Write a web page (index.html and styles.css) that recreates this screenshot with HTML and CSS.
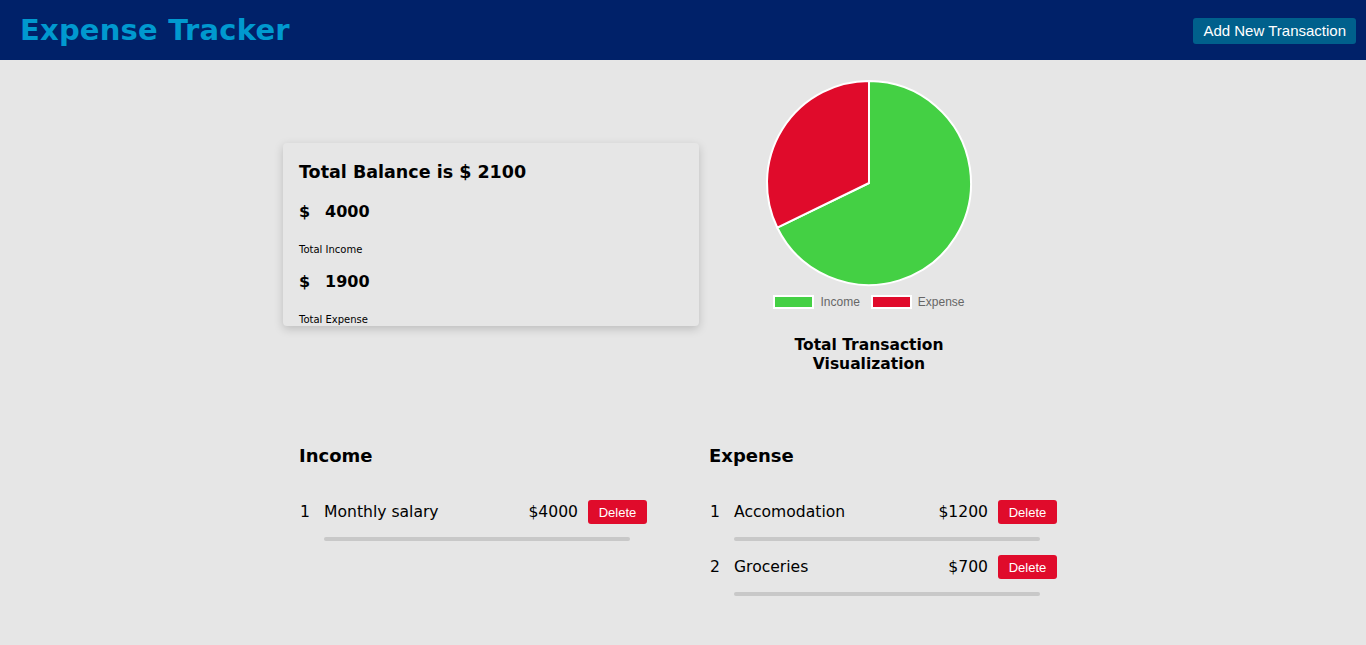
FILE: index.html
```html
<!DOCTYPE html>
<html>
<head>
<meta charset="utf-8">
<title>Expense Tracker</title>
<link rel="stylesheet" href="styles.css">
</head>
<body>
<header class="topbar">
  <h1 class="brand">Expense Tracker</h1>
  <button class="add-btn">Add New Transaction</button>
</header>
<main class="container">
  <section class="summary">
    <div class="card">
      <h2 class="balance">Total Balance is $ 2100</h2>
      <div class="amount"><span class="cur">$</span><span>4000</span></div>
      <div class="label">Total Income</div>
      <div class="amount"><span class="cur">$</span><span>1900</span></div>
      <div class="label">Total Expense</div>
    </div>
    <div class="chart">
      <svg class="pie" width="210" height="210" viewBox="0 0 210 210">
        <path d="M105 105 L105 3 A102 102 0 1 1 13.32 149.72 Z" fill="#44d044" stroke="#fff" stroke-width="2" stroke-linejoin="round"/>
        <path d="M105 105 L13.32 149.72 A102 102 0 0 1 105 3 Z" fill="#e00b2b" stroke="#fff" stroke-width="2" stroke-linejoin="round"/>
      </svg>
      <div class="legend">
        <span class="swatch green"></span><span class="legend-text">Income</span>
        <span class="swatch red"></span><span class="legend-text">Expense</span>
      </div>
      <h3 class="chart-title">Total Transaction<br>Visualization</h3>
    </div>
  </section>
  <section class="lists">
    <div class="list">
      <h2 class="list-title">Income</h2>
      <ul class="rows">
        <li class="row">
          <span class="num">1</span>
          <div class="body">
            <div class="line"><span class="name">Monthly salary</span><span class="amt">$4000</span><button class="del">Delete</button></div>
            <div class="bar"></div>
          </div>
        </li>
      </ul>
    </div>
    <div class="list">
      <h2 class="list-title">Expense</h2>
      <ul class="rows">
        <li class="row">
          <span class="num">1</span>
          <div class="body">
            <div class="line"><span class="name">Accomodation</span><span class="amt">$1200</span><button class="del">Delete</button></div>
            <div class="bar"></div>
          </div>
        </li>
        <li class="row">
          <span class="num">2</span>
          <div class="body">
            <div class="line"><span class="name">Groceries</span><span class="amt">$700</span><button class="del">Delete</button></div>
            <div class="bar"></div>
          </div>
        </li>
      </ul>
    </div>
  </section>
</main>
</body>
</html>
```
FILE: styles.css
```css
* { box-sizing: border-box; }
html, body { margin: 0; padding: 0; }
body {
  background: #e6e6e6;
  font-family: "DejaVu Sans", "Liberation Sans", sans-serif;
  color: #000;
  height: 645px;
  overflow: hidden;
}
.topbar {
  height: 60px;
  background: #002169;
  display: flex;
  align-items: center;
  justify-content: space-between;
  padding: 0 10px 0 20px;
}
.brand {
  margin: 0;
  font-size: 29px;
  font-weight: bold;
  color: #0099cf;
  letter-spacing: 0.2px;
}
.add-btn {
  background: #00608c;
  color: #fff;
  border: none;
  border-radius: 3px;
  font-family: "Liberation Sans", Arial, sans-serif;
  font-size: 15px;
  height: 26px;
  padding: 0 10px;
  margin-top: 1px;
}
.container {
  width: 800px;
  margin: 0 auto;
}
.summary {
  display: grid;
  grid-template-columns: 416px 340px;
  padding-top: 18px;
}
.card {
  margin-top: 65px;
  height: 183px;
  overflow: hidden;
  border-radius: 4px;
  background: #e6e6e6;
  box-shadow: 0 3px 10px rgba(0,0,0,0.18);
  padding: 17px 16px 0;
}
.balance {
  margin: 0;
  font-size: 17.5px;
  line-height: 24px;
  font-weight: bold;
}
.amount {
  margin-top: 16px;
  font-size: 16px;
  line-height: 24px;
  font-weight: bold;
}
.amount + .label { margin-top: 19px; }
.label + .amount { margin-top: 13px; }
.cur { display: inline-block; width: 26px; }
.label {
  font-size: 10px;
  line-height: 14px;
}
.chart {
  display: flex;
  flex-direction: column;
  align-items: center;
}
.pie { display: block; }
.legend {
  margin-top: 7px;
  display: flex;
  align-items: center;
  font-family: "Liberation Sans", Arial, sans-serif;
  font-size: 12px;
  color: #666;
}
.swatch {
  width: 41px;
  height: 14px;
  border: 2px solid #fff;
  margin-right: 6px;
}
.swatch.green { background: #44d044; }
.swatch.red { background: #e00b2b; margin-left: 11px; }
.chart-title {
  margin: 27px 0 0;
  text-align: center;
  font-size: 15.5px;
  line-height: 19px;
  font-weight: bold;
}
.lists {
  display: grid;
  grid-template-columns: 360px 360px;
  column-gap: 50px;
  padding-left: 16px;
  margin-top: 69px;
}
.list-title {
  margin: 0;
  font-size: 18px;
  line-height: 26px;
  font-weight: bold;
}
.rows {
  list-style: none;
  margin: 31px 0 0;
  padding: 0;
}
.row {
  display: grid;
  grid-template-columns: 25px 1fr;
  align-items: start;
  margin-bottom: 14px;
}
.num, .line {
  font-size: 15.6px;
  line-height: 24px;
}
.num { padding-left: 1px; }
.line {
  display: flex;
  align-items: center;
  width: 323px;
}
.name { flex: 1; }
.amt { margin-right: 10px; }
.del {
  background: #e00b2b;
  color: #fff;
  border: none;
  border-radius: 3px;
  font-family: "Liberation Sans", Arial, sans-serif;
  font-size: 13px;
  height: 24px;
  width: 59px;
  padding: 0;
}
.bar {
  margin-top: 13px;
  width: 306px;
  height: 4px;
  border-radius: 2px;
  background: #c8c8c8;
}
```
